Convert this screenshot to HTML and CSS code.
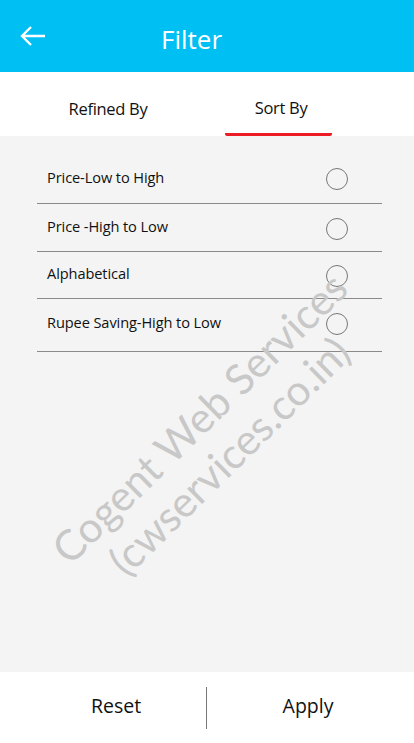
FILE: index.html
```html
<!DOCTYPE html>
<html>
<head>
<meta charset="utf-8">
<link rel="stylesheet" href="styles.css">
</head>
<body>
<div class="app">
  <header class="topbar">
    <svg class="back" width="26" height="20" viewBox="0 0 26 20"><path d="M2 10H25M11 1L2 10L11 19" fill="none" stroke="#fff" stroke-width="2.4"/></svg>
    <h1 class="title">Filter</h1>
  </header>
  <nav class="tabs">
    <div class="tab">Refined By</div>
    <div class="tab active">Sort By</div>
  </nav>
  <main class="content">
    <ul class="list">
      <li class="row r1"><span>Price-Low to High</span><i class="radio"></i></li>
      <li class="row r2"><span>Price -High to Low</span><i class="radio"></i></li>
      <li class="row r3"><span>Alphabetical</span><i class="radio"></i></li>
      <li class="row r4"><span>Rupee Saving-High to Low</span><i class="radio"></i></li>
    </ul>
    <div class="watermark">
      <div>Cogent Web Services</div>
      <div>(cwservices.co.in)</div>
    </div>
  </main>
  <footer class="bottom">
    <button class="btn reset">Reset</button>
    <span class="divider"></span>
    <button class="btn apply">Apply</button>
  </footer>
</div>
</body>
</html>
```

FILE: styles.css
```css
* { box-sizing: border-box; }
html, body { margin: 0; padding: 0; }
body { font-family: "Open Sans", "Liberation Sans", sans-serif; color: #111; }
.app { width: 414px; height: 743px; display: flex; flex-direction: column; }
.topbar { height: 72px; background: #00bff3; display: flex; align-items: center; position: relative; padding-left: 161px; }
.back { position: absolute; left: 20px; top: 26px; }
.title { margin: 0; color: #fff; font-weight: 400; font-size: 26px; padding-top: 5px; }
.tabs { height: 64px; background: #fff; display: flex; }
.tab { display: flex; justify-content: center; align-items: center; font-size: 16.5px; letter-spacing: -0.3px; padding-top: 8px; }
.tab:first-child { width: 216px; }
.tab.active { width: 107px; margin-left: 9px; padding-left: 5px; border-bottom: 3px solid #ed1c24; border-radius: 0 0 2px 2px; padding-top: 9px; }
.content { flex: 1; background: #f4f4f4; position: relative; overflow: hidden; padding: 0 32px 0 37px; }
.list { list-style: none; margin: 0; padding: 0; }
.row { display: flex; justify-content: space-between; align-items: flex-start; border-bottom: 1px solid #8a8a8a; font-size: 14.6px; padding-left: 10px; letter-spacing: -0.1px; }
.row span { line-height: 20px; }
.radio { width: 22px; height: 22px; border: 1px solid #777; border-radius: 50%; margin-right: 34px; }
.r1 { height: 68px; padding-top: 31px; }
.r1 .radio { margin-top: 1px; }
.r2 { height: 48px; padding-top: 12px; }
.r2 .radio { margin-top: 2px; }
.r3 { height: 47px; padding-top: 11px; }
.r3 .radio { margin-top: 2px; }
.r4 { height: 53px; padding-top: 13px; }
.r4 .radio { margin-top: 1px; }
.watermark { position: absolute; left: 42px; top: 402px; transform: rotate(-44.5deg); transform-origin: left top; color: #c8c8c8; font-family: "Lato", sans-serif; font-weight: 400; font-size: 42px; line-height: 48px; white-space: nowrap; pointer-events: none; }
.watermark div:last-child { padding-left: 32px; }
.bottom { height: 71px; background: #fff; display: flex; align-items: center; }
.btn { border: 0; background: none; font-family: inherit; font-size: 19.5px; color: #111; padding: 0 0 4px; }
.reset { width: 206px; padding-left: 26px; }
.apply { flex: 1; padding-right: 5px; }
.divider { width: 1px; height: 42px; background: #777; }
```
